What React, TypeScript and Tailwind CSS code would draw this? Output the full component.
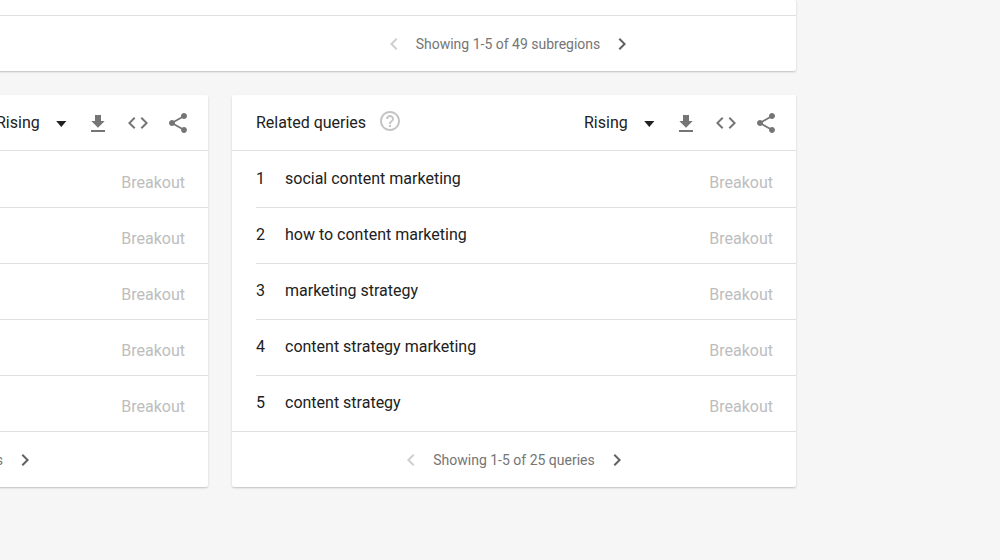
import type { ReactNode } from "react";

const queries = [
  "social content marketing",
  "how to content marketing",
  "marketing strategy",
  "content strategy marketing",
  "content strategy",
];

function Icon({ d, className = "" }: { d: string; className?: string }) {
  return (
    <svg viewBox="0 0 24 24" className={`size-6 shrink-0 fill-current ${className}`} aria-hidden="true">
      <path d={d} />
    </svg>
  );
}

const icons = {
  drop: "M7.2 10l5.1 6 5.1-6z",
  download: "M18.7 10H15V4H9v6H5.3l6.7 6.8 6.7-6.8zM5 19v2h14v-2H5z",
  code: "M9.4 16.6L4.8 12l4.6-4.6L8 6l-6 6 6 6 1.4-1.4zm5.2 0l4.6-4.6-4.6-4.6L16 6l6 6-6 6-1.4-1.4z",
  share:
    "M18 16.08c-.76 0-1.44.3-1.96.77L8.91 12.7c.05-.23.09-.46.09-.7s-.04-.47-.09-.7l7.05-4.11c.54.5 1.25.81 2.04.81 1.66 0 3-1.34 3-3s-1.34-3-3-3-3 1.34-3 3c0 .24.04.47.09.7L8.04 9.81C7.5 9.31 6.79 9 6 9c-1.66 0-3 1.34-3 3s1.34 3 3 3c.79 0 1.5-.31 2.04-.81l7.12 4.16c-.05.21-.08.43-.08.65 0 1.61 1.31 2.92 2.92 2.92 1.61 0 2.92-1.31 2.92-2.92s-1.31-2.92-2.92-2.92z",
  help: "M11 18h2v-2h-2v2zm1-16C6.48 2 2 6.48 2 12s4.48 10 10 10 10-4.48 10-10S17.52 2 12 2zm0 18c-4.41 0-8-3.59-8-8s3.59-8 8-8 8 3.59 8 8-3.59 8-8 8zm0-14c-2.21 0-4 1.79-4 4h2c0-1.1.9-2 2-2s2 .9 2 2c0 2-3 1.75-3 5h2c0-2.25 3-2.5 3-5 0-2.21-1.79-4-4-4z",
  left: "M15.41 7.41L14 6l-6 6 6 6 1.41-1.41L10.83 12z",
  right: "M10 6L8.59 7.41 13.17 12l-4.58 4.59L10 18l6-6z",
};

function Card({ children, className = "" }: { children: ReactNode; className?: string }) {
  return (
    <section
      className={`rounded-xs bg-white shadow-[0_1px_2px_rgba(0,0,0,0.22)] ${className}`}
    >
      {children}
    </section>
  );
}

function Pager({ label }: { label: string }) {
  return (
    <nav aria-label={label} className="flex h-[55px] items-center justify-center gap-2.5 pt-px text-[#757575]">
      <button type="button" aria-label="Previous" disabled className="text-[#cfcfcf]">
        <Icon d={icons.left} />
      </button>
      <span className="text-sm">{label}</span>
      <button type="button" aria-label="Next" className="text-[#616161]">
        <Icon d={icons.right} />
      </button>
    </nav>
  );
}

function Toolbar({ name }: { name: string }) {
  return (
    <div className="ml-auto flex items-center gap-[13px] text-[#757575]">
      <label className="relative flex items-center text-[#212121]">
        <select
          aria-label={`Sort ${name}`}
          className="w-[77px] appearance-none bg-transparent text-base"
          defaultValue="Rising"
        >
          <option>Rising</option>
        </select>
        <Icon d={icons.drop} className="pointer-events-none absolute right-0" />
      </label>
      <div className="flex gap-4">
        <button type="button" aria-label="Download">
          <Icon d={icons.download} />
        </button>
        <button type="button" aria-label="Embed">
          <Icon d={icons.code} />
        </button>
        <button type="button" aria-label="Share">
          <Icon d={icons.share} />
        </button>
      </div>
    </div>
  );
}

function RelatedCard({ title, terms, pager }: { title?: string; terms: string[]; pager: string }) {
  return (
    <Card>
      <header className="flex h-14 items-center border-b border-[#e0e0e0] pr-4.5 pl-6">
        {title && (
          <>
            <h2 className="text-base text-[#212121]">{title}</h2>
            <button type="button" aria-label="Help" className="ml-3 pb-1 text-[#c4c4c4]">
              <Icon d={icons.help} />
            </button>
          </>
        )}
        <Toolbar name={pager} />
      </header>
      <ol className="border-b border-[#e0e0e0] pt-px pl-6">
        {terms.map((term, i) => (
          <li
            key={i}
            className="flex h-14 items-center border-b border-[#e0e0e0] pr-[23px] pb-0.5 text-base text-[#212121] last:h-[55px] last:border-b-0"
          >
            {term && (
              <>
                <span className="w-[29px]">{i + 1}</span>
                <span>{term}</span>
              </>
            )}
            <span className="ml-auto pt-2 text-[#bdbdbd]">Breakout</span>
          </li>
        ))}
      </ol>
      <Pager label={pager} />
    </Card>
  );
}

export default function App() {
  return (
    <div className="min-h-screen overflow-hidden bg-[#f6f6f6] font-['Roboto',sans-serif]">
      <main className="flex justify-end pr-51">
        <div className="w-[1152px] shrink-0">
          <Card className="pt-[15px]">
            <div className="grid grid-cols-2 border-t border-[#e0e0e0]">
              <div className="col-start-2">
                <Pager label="Showing 1-5 of 49 subregions" />
              </div>
            </div>
          </Card>
          <div className="mt-6 grid grid-cols-2 gap-6">
            <RelatedCard terms={["", "", "", "", ""]} pager="Showing 1-5 of 25 topics" />
            <RelatedCard title="Related queries" terms={queries} pager="Showing 1-5 of 25 queries" />
          </div>
        </div>
      </main>
    </div>
  );
}
